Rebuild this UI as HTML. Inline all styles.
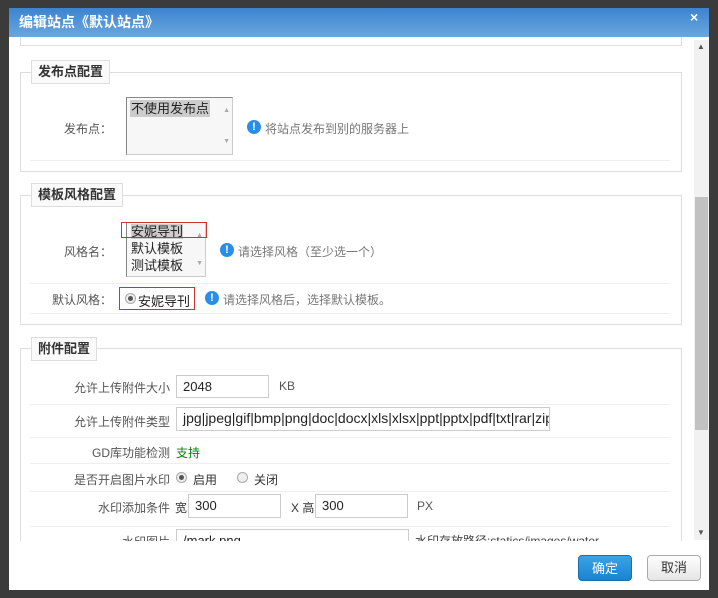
<!DOCTYPE html>
<html><head><meta charset="utf-8"><style>
*{margin:0;padding:0;box-sizing:border-box}
body{width:718px;height:598px;background:#3b3b3b;font-family:"Liberation Sans","Noto Sans CJK SC",sans-serif;font-size:12px;color:#444;position:relative;overflow:hidden}
.a{position:absolute}
.dlg{left:9px;top:8px;width:700px;height:582px;background:#fff}
.title{left:9px;top:8px;width:700px;height:29px;background:linear-gradient(#3c83cf,#6aa7de);color:#fff;font-weight:bold;font-size:14px;line-height:28px;padding-left:10px}
.x{left:690px;top:9px;color:#fff;font-weight:bold;font-size:14px}
.fs{border:1px solid #ddd;background:#fff}
.lg{border:1px solid #ddd;background:#fafafa;font-weight:bold;font-size:13px;color:#333;padding:3px 6px;line-height:16px}
.sep{height:1px;background:#eee;left:30px;width:640px}
.lbl{text-align:right;color:#555;font-size:12px}
.in{border:1px solid #ccc;background:#fff;font-size:13px;color:#222;padding-left:6px;line-height:21px;overflow:hidden;white-space:nowrap}
.info{width:14px;height:14px;border-radius:50%;background:#2a8ee8;color:#fff;font-weight:bold;font-size:11px;text-align:center;line-height:14px}
.tip{color:#777;font-size:12px}
.sel{border:1px solid #888;border-right-color:#ccc;border-bottom-color:#ccc;background:#f7f7f7;font-size:13px;color:#222;line-height:17px}
.radio{width:11px;height:11px;border-radius:50%;border:1px solid #aaa;background:#eee}
.radio.on::after{content:"";position:absolute;left:2px;top:2px;width:5px;height:5px;border-radius:50%;background:#555}
</style></head><body>
<div class="a dlg"></div>
<!-- top leftover fieldset -->
<div class="a fs" style="left:20px;top:30px;width:662px;height:16px;border-top:none"></div>
<div class="a title">编辑站点《默认站点》</div>
<div class="a x">×</div>
<!-- scrollbar -->
<div class="a" style="left:694px;top:40px;width:15px;height:500px;background:#f1f1f1"></div>
<div class="a" style="left:695px;top:197px;width:13px;height:233px;background:#c1c1c1"></div>
<div class="a" style="left:697px;top:42px;font-size:8px;color:#555">▲</div>
<div class="a" style="left:697px;top:528px;font-size:8px;color:#555">▼</div>

<!-- section 1 -->
<div class="a fs" style="left:20px;top:72px;width:662px;height:100px"></div>
<div class="a lg" style="left:31px;top:60px">发布点配置</div>
<div class="a lbl" style="left:40px;top:120px;width:72px">发布点：</div>
<div class="a sel" style="left:126px;top:97px;width:107px;height:58px"><span style="background:#ccc;display:inline-block;margin:2px 0 0 3px;padding:0 1px">不使用发布点</span>
<div class="a" style="right:2px;top:4px;font-size:7px;color:#aaa">▲</div><div class="a" style="right:2px;bottom:4px;font-size:7px;color:#aaa">▼</div></div>
<div class="a info" style="left:247px;top:120px">!</div>
<div class="a tip" style="left:265px;top:120px">将站点发布到别的服务器上</div>
<div class="a sep" style="top:160px"></div>

<!-- section 2 -->
<div class="a fs" style="left:20px;top:195px;width:662px;height:130px"></div>
<div class="a lg" style="left:31px;top:183px">模板风格配置</div>
<div class="a lbl" style="left:40px;top:243px;width:72px">风格名：</div>
<div class="a sel" style="left:126px;top:222px;width:80px;height:55px;padding:0 0 0 4px"><span style="background:#ccc">安妮导刊</span><br>默认模板<br>测试模板
<div class="a" style="right:2px;top:4px;font-size:7px;color:#aaa">▲</div><div class="a" style="right:2px;bottom:4px;font-size:7px;color:#aaa">▼</div></div>
<div class="a" style="left:121px;top:222px;width:86px;height:16px;border:1px solid #c33"></div>
<div class="a info" style="left:220px;top:243px">!</div>
<div class="a tip" style="left:238px;top:243px">请选择风格（至少选一个）</div>
<div class="a sep" style="top:283px"></div>
<div class="a lbl" style="left:40px;top:291px;width:72px">默认风格：</div>
<div class="a" style="left:119px;top:287px;width:76px;height:23px;border:1px solid #c33"></div>
<div class="a radio on" style="left:125px;top:293px"></div>
<div class="a" style="left:138px;top:291px;font-size:13px;color:#222">安妮导刊</div>
<div class="a info" style="left:205px;top:291px">!</div>
<div class="a tip" style="left:223px;top:291px">请选择风格后，选择默认模板。</div>
<div class="a sep" style="top:313px"></div>

<!-- section 3 -->
<div class="a fs" style="left:20px;top:348px;width:662px;height:200px"></div>
<div class="a lg" style="left:31px;top:337px">附件配置</div>
<div class="a lbl" style="left:40px;top:379px;width:130px">允许上传附件大小</div>
<div class="a in" style="left:176px;top:375px;width:93px;height:23px">2048</div>
<div class="a" style="left:279px;top:379px;color:#555">KB</div>
<div class="a sep" style="top:404px"></div>
<div class="a lbl" style="left:40px;top:413px;width:130px">允许上传附件类型</div>
<div class="a in" style="left:176px;top:407px;width:374px;height:24px;padding-left:6px;font-size:14px">jpg|jpeg|gif|bmp|png|doc|docx|xls|xlsx|ppt|pptx|pdf|txt|rar|zip</div>
<div class="a sep" style="top:437px"></div>
<div class="a lbl" style="left:40px;top:444px;width:130px">GD库功能检测</div>
<div class="a" style="left:176px;top:444px;color:#080">支持</div>
<div class="a sep" style="top:463px"></div>
<div class="a lbl" style="left:40px;top:471px;width:130px">是否开启图片水印</div>
<div class="a radio on" style="left:176px;top:472px"></div>
<div class="a" style="left:193px;top:471px;color:#333">启用</div>
<div class="a radio" style="left:237px;top:472px"></div>
<div class="a" style="left:254px;top:471px;color:#333">关闭</div>
<div class="a sep" style="top:491px"></div>
<div class="a lbl" style="left:40px;top:499px;width:130px">水印添加条件</div>
<div class="a" style="left:175px;top:499px;color:#333">宽</div>
<div class="a in" style="left:188px;top:494px;width:93px;height:24px">300</div>
<div class="a" style="left:291px;top:499px;color:#333">X 高</div>
<div class="a in" style="left:315px;top:494px;width:93px;height:24px">300</div>
<div class="a" style="left:417px;top:499px;color:#555">PX</div>
<div class="a sep" style="top:526px"></div>
<div class="a lbl" style="left:40px;top:533px;width:130px">水印图片</div>
<div class="a in" style="left:176px;top:529px;width:233px;height:24px">/mark.png</div>
<div class="a" style="left:415px;top:532px;color:#444">水印存放路径:statics/images/water</div>

<!-- footer -->
<div class="a" style="left:9px;top:541px;width:700px;height:49px;background:#fff"></div>
<div class="a" style="left:578px;top:555px;width:54px;height:26px;border-radius:4px;background:linear-gradient(#3aa4e6,#1c82cf);color:#fff;text-align:center;line-height:26px;font-size:13px;border:1px solid #1a6fb0">确定</div>
<div class="a" style="left:647px;top:555px;width:54px;height:26px;border-radius:4px;background:linear-gradient(#fdfdfd,#e6e6e6);color:#333;text-align:center;line-height:24px;font-size:13px;border:1px solid #aaa">取消</div>
</body></html>
